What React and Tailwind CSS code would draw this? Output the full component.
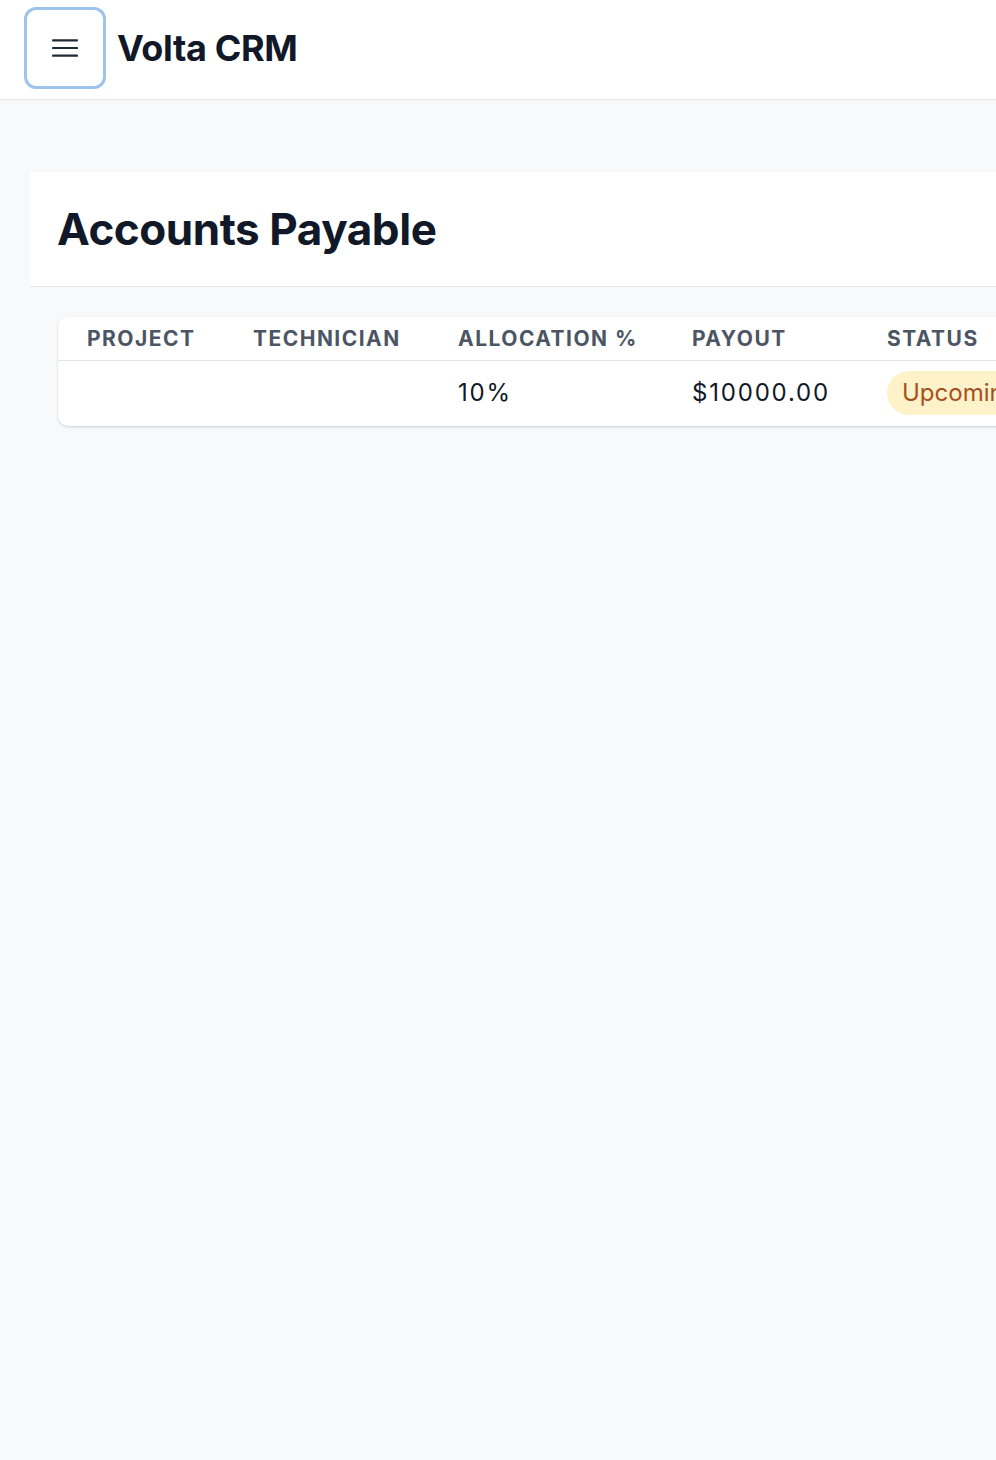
import React from "react";

export default function App() {
  return (
    <div className="min-h-[1460px] w-[996px] overflow-hidden bg-[#f8f9fb]" style={{ fontFamily: "Inter, 'Noto Sans', sans-serif" }}>
      <header className="flex h-[100px] items-center gap-[11px] border-b border-[#e3e6ea] bg-white pb-[4px] pl-[24px]">
        <button className="flex h-[82px] w-[82px] items-center justify-center rounded-[12px] border-[3px] border-[#9ec4ec] bg-white">
          <svg width="26" height="20" viewBox="0 0 26 20" fill="none">
            <path d="M1 2.3h24M1 10h24M1 17.7h24" stroke="#1f2937" strokeWidth="2.2" strokeLinecap="round" />
          </svg>
        </button>
        <h1 className="text-[36px] font-bold leading-none tracking-[-0.01em] text-[#111827]">Volta CRM</h1>
      </header>
      <main className="pl-[30px] pt-[72px]">
        <div className="w-[1060px] bg-white">
          <div className="flex h-[115px] items-center border-b border-[#e5e7eb] pl-[27px]">
            <h2 className="text-[44px] font-bold leading-none tracking-[-0.01em] text-[#111827]">Accounts Payable</h2>
          </div>
          <div className="bg-[#f8f9fb] pl-[28px] pt-[30px]">
            <div className="w-[1010px] overflow-hidden rounded-[10px] bg-white shadow-[0_1px_3px_rgba(0,0,0,0.12),0_1px_2px_rgba(0,0,0,0.06)]">
              <table className="w-full table-fixed border-collapse text-left">
                <colgroup>
                  <col className="w-[166px]" />
                  <col className="w-[205px]" />
                  <col className="w-[234px]" />
                  <col className="w-[195px]" />
                  <col />
                </colgroup>
                <thead>
                  <tr className="h-[43px] border-b border-[#e2e5e9]">
                    {["Project", "Technician", "Allocation %", "Payout", "Status"].map((h) => (
                      <th key={h} className="whitespace-nowrap px-[29px] text-[21px] font-bold uppercase tracking-[0.07em] text-[#4b5563]">
                        {h}
                      </th>
                    ))}
                  </tr>
                </thead>
                <tbody>
                  <tr className="h-[66px]">
                    <td className="px-[29px]"></td>
                    <td className="px-[29px]"></td>
                    <td className="px-[29px] text-[24px] tracking-[0.075em] text-[#111827]">10%</td>
                    <td className="px-[29px] text-[24px] tracking-[0.075em] text-[#111827]">$10000.00</td>
                    <td className="whitespace-nowrap px-[29px]">
                      <span className="inline-flex h-[44px] items-center rounded-full bg-[#fdf2c9] px-[15px] text-[24px] text-[#a5511e]">
                        Upcoming
                      </span>
                    </td>
                  </tr>
                </tbody>
              </table>
            </div>
          </div>
        </div>
      </main>
    </div>
  );
}
